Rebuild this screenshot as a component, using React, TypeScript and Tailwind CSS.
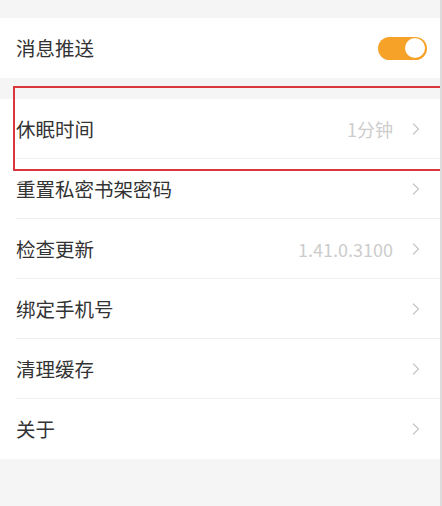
import React from 'react';

interface Row {
  label: string;
  value?: string;
}

const rows: Row[] = [
  { label: '休眠时间', value: '1分钟' },
  { label: '重置私密书架密码' },
  { label: '检查更新', value: '1.41.0.3100' },
  { label: '绑定手机号' },
  { label: '清理缓存' },
  { label: '关于' },
];

function Chevron() {
  return (
    <svg width="8" height="14" viewBox="0 0 8 14" fill="none" className="shrink-0">
      <path d="M1.5 2 L6.5 7 L1.5 12" stroke="#c9c9c9" strokeWidth="1.4" strokeLinecap="round" strokeLinejoin="round" />
    </svg>
  );
}

export default function App() {
  return (
    <div
      className="relative w-[442px] h-[506px] bg-[#f5f5f5] border-r-2 border-[#dcdcdc] overflow-hidden"
      style={{ fontFamily: '"Noto Sans CJK SC", "Noto Sans", sans-serif' }}
    >
      <div className="h-[18px]" />

      {/* Push notifications */}
      <div className="h-[60px] bg-white flex items-center pl-[16px] pr-[13px]">
        <span className="flex-1 text-[19.5px] text-[#333] leading-none">消息推送</span>
        <div className="w-[49px] h-[23px] rounded-full bg-[#f6a228] flex items-center justify-end pr-[2px]">
          <div className="w-[20px] h-[20px] rounded-full bg-white" />
        </div>
      </div>

      <div className="h-[21px]" />

      {/* Settings list */}
      <div className="bg-white">
        {rows.map((row, i) => (
          <div key={row.label} className="h-[60px] flex items-center pl-[16px]">
            <div
              className={`flex-1 h-full flex items-center pr-[20px] ${i < rows.length - 1 ? 'border-b border-[#efefef]' : ''}`}
            >
              <span className="flex-1 text-[19.5px] text-[#333] leading-none">{row.label}</span>
              {row.value && (
                <span className="text-[18px] text-[#cccccc] leading-none mr-[19px]">
                  {row.value}
                </span>
              )}
              <Chevron />
            </div>
          </div>
        ))}
      </div>

      {/* Annotation box */}
      <div className="absolute left-[13px] top-[86px] w-[450px] h-[85px] border-2 border-[#d8373c] pointer-events-none" />
    </div>
  );
}
